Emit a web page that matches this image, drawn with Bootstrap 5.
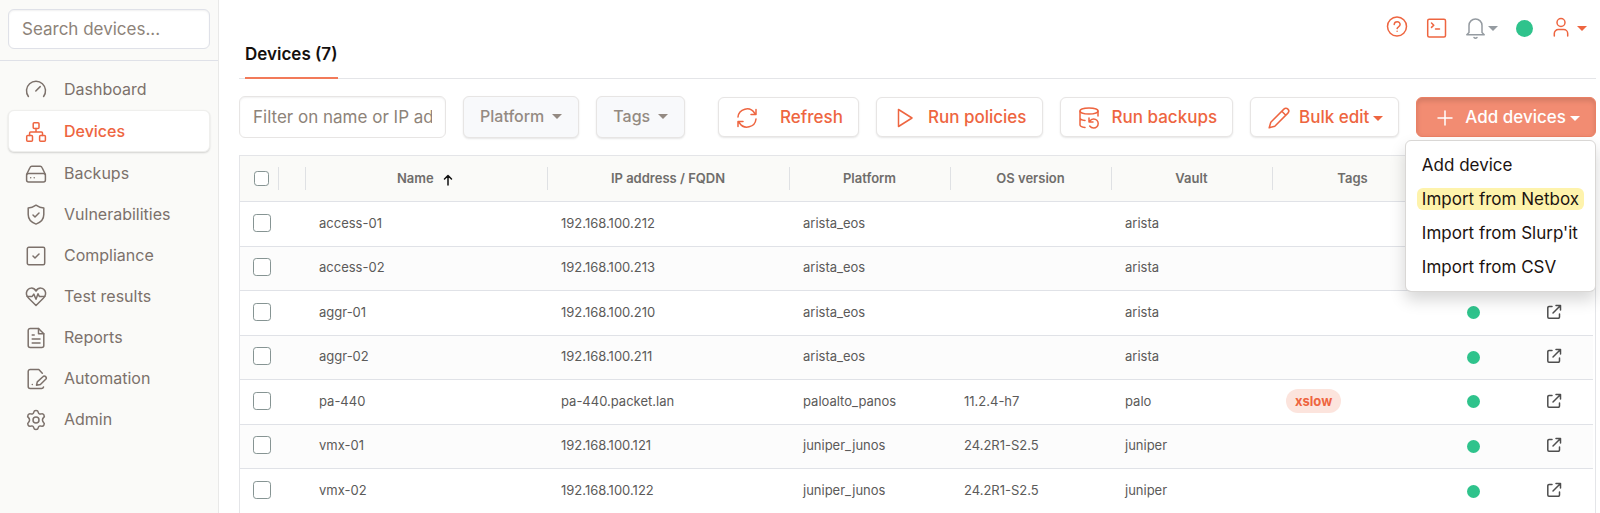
<!DOCTYPE html>
<html lang="en">
<head>
<meta charset="utf-8">
<meta name="viewport" content="width=device-width, initial-scale=1">
<title>Devices</title>
<link href="https://cdn.jsdelivr.net/npm/bootstrap@5.3.0/dist/css/bootstrap.min.css" rel="stylesheet">
<style>
:root { --brand: #ee6540; --stone: #7c716b; --rule: #e4e5e8; --ok: #2fc38c; }
body { font-family: Inter, "Liberation Sans", sans-serif; font-size: 16px; line-height: 24px; color: #1c1310; }
svg { fill: none; stroke: currentColor; stroke-width: 1.5; stroke-linecap: round; stroke-linejoin: round; flex: none; }
.side-panel { width: 219px; background: #fafaf8; border-right: 1px solid #e9e9e8; }
.side-search { height: 61px; padding: 9px 8px; border-bottom: 1px solid #dfe1e8; }
.form-control { border-color: #dfe1e8; border-radius: 6px; font-size: 17px; padding: 0 13px; box-shadow: inset 0 1px 2px rgba(0,0,0,.06); }
.form-control::placeholder { color: #8d8379; }
.side-search .form-control { height: 40px; }
.side-nav { padding: 8px; gap: 1px; }
.side-nav .nav-link { height: 40px; padding: 0 16px; gap: 16px; color: var(--stone); display: flex; align-items: center; border-radius: 6px; border: 1px solid transparent; }
.side-nav .nav-link svg { margin-top: 2px; margin-left: -1px; }
.side-nav .nav-link.active { height: 42px; background: #fff; color: var(--brand); font-weight: 500; border-color: #efefed; box-shadow: 0 1px 2px rgba(0,0,0,.16); }
.main-area { padding: 0 4px 0 20px; min-width: 0; }
.page-head { height: 79px; border-bottom: 1px solid var(--rule); }
.page-tab { height: 79px; margin-left: 6px; padding-top: 42px; font-size: 17px; font-weight: 600; color: #14100e; text-decoration: none; border-bottom: 2px solid #f27a59; }
.head-tools { height: 56px; padding-right: 9px; color: var(--brand); }
.tool-btn { background: none; border: 0; padding: 0; color: inherit; display: flex; align-items: center; }
.bell-btn { color: #959ba1; margin-right: 2px; }
.bell-btn.dropdown-toggle::after { margin-left: 1px; }
.status-dot { display: inline-block; width: 13px; height: 13px; border-radius: 50%; background: var(--ok); vertical-align: middle; }
.status-dot.big { width: 17px; height: 17px; }
.tool-row { padding: 17px 0; gap: 17px; }
.tool-row .form-control { width: 207px; height: 42px; border-color: #e7e5e4; }
.tool-row .btn { height: 40px; border-radius: 6px; padding: 0 15px 0 16px; font-size: 17px; line-height: 24px; font-weight: 500; color: var(--brand); background: #fff; border: 1px solid #e7e5e4; box-shadow: 0 1px 2px rgba(0,0,0,.1); display: flex; align-items: center; white-space: nowrap; }
.tool-row .btn svg { margin-top: 2px; }
.tool-row .btn-filter { height: 42px; padding: 0 16px 2px; font-size: 16px; background: #f8f9fb; color: #948a82; }
.tool-row .btn-add { background: #f28c72; border-color: #ea8064; color: #fff; box-shadow: inset 0 3px 5px rgba(0,0,0,.125); }
.dropdown-toggle::after { margin-left: 4px; vertical-align: middle; border-top-width: 5px; border-left-width: 5px; border-right-width: 5px; }
.btn-filter.dropdown-toggle::after { margin-left: 8px; border-top-width: 5px; border-left-width: 5px; border-right-width: 5px; }
.gap-narrow { gap: 11px; }
.gap-wide { gap: 21px; }
.add-menu { display: block; top: 43px; right: 0; min-width: 190px; padding: 7px 0; border: 1px solid #d9d7d5; border-radius: 6px; box-shadow: 0 8px 16px rgba(0,0,0,.16); --bs-dropdown-font-size: 17px; }
.add-menu .dropdown-item { height: 34px; padding: 6px 11px; color: #1c1310; line-height: 22px; }
.add-menu .dropdown-item span { display: inline-block; padding: 0 5px; border-radius: 6px; }
.add-menu .picked { background: #fef3ac; }
.grid-box { padding-right: 2px; border: 1px solid var(--rule); border-bottom: 0; }
.device-grid { table-layout: fixed; width: 100%; margin: 0; font-size: 13px; line-height: 20px; color: #5b5a59; }
.device-grid th, .device-grid td { vertical-align: middle; white-space: nowrap; }
.device-grid th { padding: 0 13px; font-weight: 600; color: #6f6d6b; text-align: center; }
.device-grid td { padding: 0 13px 2px 14px; }
.device-grid th:first-child, .device-grid td:first-child { padding-left: 13px; }
.device-grid thead tr { height: 45px; background: #fafaf8; }
.device-grid th + th { background: linear-gradient(#dfe1e4, #dfe1e4) left center / 1px 23px no-repeat; }
.device-grid tbody tr { height: 45px; border-top: 1px solid #e0e2e7; }
.device-grid tbody tr:nth-child(even) { height: 44px; background: #fcfcfc; }
.sort-arrow { color: #111; }
.form-check-input { width: 18px; height: 18px; margin: 0; display: block; border: 1px solid #869493; border-radius: 3px; }
.form-check-input.small-box { width: 15px; height: 15px; margin-left: 1px; }
.tag-pill { padding: 0 9px; height: 24px; line-height: 24px; border-radius: 12px; background: #fce4dd; color: var(--brand); font-weight: 700; display: inline-block; }
.open-link { color: #4e4e4e; display: block; line-height: 0; }
</style>
</head>
<body>
<div class="d-flex min-vh-100">
  <aside class="side-panel flex-shrink-0">
    <div class="side-search"><input class="form-control" type="search" placeholder="Search devices..." aria-label="Search devices"></div>
    <nav class="side-nav nav flex-column">
      <a class="nav-link" href="#"><svg width="24" height="24" viewBox="0 0 24 24"><path d="M4.400 18.500a9.500 9.500 0 1 1 15.200 0M11.800 13l4.400-4.400"/></svg>Dashboard</a>
      <a class="nav-link active" aria-current="page" href="#"><svg width="24" height="24" viewBox="0 0 24 24"><rect x="9.200" y="2.700" width="5.800" height="5.800" rx="1"/><rect x="2.700" y="15.400" width="5.800" height="5.800" rx="1"/><rect x="15.600" y="15.400" width="5.800" height="5.800" rx="1"/><path d="M12 8.500V12M5.600 15.400V13a1 1 0 0 1 1-1h10.900a1 1 0 0 1 1 1v2.400"/></svg>Devices</a>
      <a class="nav-link" href="#"><svg width="24" height="24" viewBox="0 0 24 24"><path d="M2.600 12.500 6 5.500a2 2 0 0 1 1.800-1.200h8.400a2 2 0 0 1 1.800 1.200l3.400 7"/><rect x="2.600" y="11.600" width="18.800" height="8.300" rx="2"/><path d="M6.700 15.800h.01M10.200 15.800h.01"/></svg>Backups</a>
      <a class="nav-link" href="#"><svg width="24" height="24" viewBox="0 0 24 24"><path d="M12 2.200c2.400 1.700 5 2.700 7.800 2.900v6.500c0 4.500-3 7.900-7.800 9.500-4.800-1.600-7.800-5-7.800-9.500V5.100C7 4.900 9.600 3.900 12 2.200z"/><path d="m9 12 2 2 4-4"/></svg>Vulnerabilities</a>
      <a class="nav-link" href="#"><svg width="24" height="24" viewBox="0 0 24 24"><rect x="3.300" y="3.300" width="17.400" height="17.400" rx="1.500"/><path d="m9 12 2 2 4-4"/></svg>Compliance</a>
      <a class="nav-link" href="#"><svg width="24" height="24" viewBox="0 0 24 24"><path d="M19.300 13.200 12 20.500l-7.300-7.300C2.600 11 1.900 8.300 2.900 6.100 4.500 2.400 9.500 1.900 12 6c2.500-4.100 7.500-3.600 9.100.1 1 2.200.3 4.900-1.800 7.100z"/><path d="M3.200 11.400h5l1.600-2.300 2.200 5.200 2-5.500 1.300 2.600h5.500"/></svg>Test results</a>
      <a class="nav-link" href="#"><svg width="24" height="24" viewBox="0 0 24 24"><path d="M14.500 2.500H6.200a2 2 0 0 0-2 2v15a2 2 0 0 0 2 2h11.600a2 2 0 0 0 2-2V7.800l-5.300-5.300z"/><path d="M14.500 2.500v5.300h5.300M8.200 9h2M8.200 13h7.800M8.200 17h7.800"/></svg>Reports</a>
      <a class="nav-link" href="#"><svg width="24" height="24" viewBox="0 0 24 24"><path d="M18.300 6.300 14.800 2.500H6.200a2 2 0 0 0-2 2v15a2 2 0 0 0 2 2h11.300a2 2 0 0 0 2-1.500M8.300 17.500h.01M12.500 18.200l.8-3.300 5.600-5.200a1.900 1.900 0 0 1 2.800 2.600l-5.300 5.200z"/></svg>Automation</a>
      <a class="nav-link" href="#"><svg width="24" height="24" viewBox="0 0 24 24"><path d="M9.800 4.200c.3-2.300 4.100-2.300 4.400 0 .2 1.500 1.700 2.300 3.100 1.700 2.200-.8 4 2.300 2.200 3.700-1.400 1.400-1.400 3.400 0 4.800 1.800 1.400 0 4.500-2.200 3.700-1.400-.6-2.900.2-3.100 1.700-.3 2.300-4.100 2.300-4.400 0-.2-1.500-1.700-2.300-3.100-1.700-2.200.8-4-2.300-2.200-3.700 1.400-1.400 1.400-3.400 0-4.800-1.800-1.400 0-4.500 2.200-3.700 1.400.6 2.900-.2 3.100-1.700z"/><circle cx="12" cy="12" r="3"/></svg>Admin</a>
    </nav>
  </aside>

  <main class="main-area flex-grow-1">
    <header class="page-head d-flex justify-content-between">
      <a class="page-tab" href="#">Devices (7)</a>
      <div class="head-tools d-flex align-items-center gap-3">
        <button class="tool-btn" aria-label="Help"><svg width="24" height="24" viewBox="0 0 24 24"><circle cx="12" cy="10.500" r="9.500"/><path d="M9.200 8.500c.3-3.600 6-3.500 5.900.1 0 2.300-2.900 2-3 4M12.100 15.200v.1"/></svg></button>
        <button class="tool-btn" aria-label="Console"><svg width="24" height="24" viewBox="0 0 24 24"><rect x="2.700" y="3.200" width="17.800" height="17.800" rx="1.500"/><path d="m6.500 7 2.300 2.200-2.300 2.200M10.500 13h4"/></svg></button>
        <button class="tool-btn bell-btn dropdown-toggle" aria-label="Notifications"><svg width="22" height="24" viewBox="0 0 22 24"><path d="M4 16.500V9.500a6.500 6.500 0 0 1 13 0v7l2.200 2.200H1.800zM9 21.500c.9.900 2.100.9 3 0"/></svg></button>
        <span class="status-dot big" role="img" aria-label="Online"></span>
        <button class="tool-btn dropdown-toggle" aria-label="Account"><svg width="24" height="24" viewBox="0 0 24 24"><circle cx="12" cy="6.500" r="4"/><path d="M5.300 20v-2.500a4 4 0 0 1 4-4h5.400a4 4 0 0 1 4 4V20"/></svg></button>
      </div>
    </header>

    <div class="tool-row d-flex align-items-center">
      <input class="form-control flex-shrink-0" type="text" placeholder="Filter on name or IP address" aria-label="Filter on name or IP address">
      <button class="btn btn-filter dropdown-toggle">Platform</button>
      <button class="btn btn-filter dropdown-toggle">Tags</button>
      <button class="btn gap-wide ms-auto"><svg width="24" height="24" viewBox="0 0 24 24"><path d="M3 11a9 9 0 0 1 16.500-4L21 8.500M21 3.500v5h-5M21 13a9 9 0 0 1-16.500 4L3 15.500M3 20.500v-5h5"/></svg>Refresh</button>
      <button class="btn gap-narrow"><svg width="24" height="24" viewBox="0 0 24 24"><path d="M5.500 3.500v17L19 12z"/></svg>Run policies</button>
      <button class="btn gap-narrow"><svg width="24" height="24" viewBox="0 0 24 24"><ellipse cx="12" cy="5" rx="9" ry="3"/><path d="M3 5v14c0 1.100 2 2 5 2.500M3 12c0 1.100 2 2 5 2.500M21 5v5M12 12v4h4M12.700 20a5 5 0 0 0 4 2 4.500 4.500 0 0 0 4.500-4.500 4.500 4.500 0 0 0-4.500-4.500c-1.400 0-2.600.6-3.400 1.500L12 16"/></svg>Run backups</button>
      <button class="btn"><svg class="me-2" width="24" height="24" viewBox="0 0 24 24"><path d="m3.800 16.200-1.600 5.600 5.600-1.600L20.900 7.100a2.800 2.800 0 0 0-4-4zM14.800 5.200l4 4"/></svg><span class="dropdown-toggle">Bulk edit</span></button>
      <div class="dropdown">
        <button class="btn btn-add" aria-expanded="true"><svg class="me-2" width="24" height="24" viewBox="0 0 24 24"><path d="M12 5v14M5 12h14"/></svg><span class="dropdown-toggle">Add devices</span></button>
        <ul class="dropdown-menu add-menu show">
          <li><a class="dropdown-item" href="#"><span>Add device</span></a></li>
          <li><a class="dropdown-item" href="#"><span class="picked">Import from Netbox</span></a></li>
          <li><a class="dropdown-item" href="#"><span>Import from Slurp'it</span></a></li>
          <li><a class="dropdown-item" href="#"><span>Import from CSV</span></a></li>
        </ul>
      </div>
    </div>

    <div class="grid-box">
      <table class="device-grid">
        <colgroup><col style="width:38px"><col style="width:27px"><col style="width:242px"><col style="width:242px"><col style="width:161px"><col style="width:161px"><col style="width:161px"><col style="width:161px"><col style="width:80px"><col style="width:80px"></colgroup>
        <thead><tr>
          <th><input class="form-check-input small-box" type="checkbox" aria-label="Select all devices"></th><th></th>
          <th>Name <svg class="ms-1 sort-arrow" width="14" height="14" viewBox="0 0 14 14"><path d="M7 12V2.500M3.500 6 7 2.500 10.500 6"/></svg></th>
          <th>IP address / FQDN</th><th>Platform</th><th>OS version</th><th>Vault</th><th>Tags</th><th></th><th></th>
        </tr></thead>
        <tbody id="rows"></tbody>
      </table>
    </div>
  </main>
</div>
<script src="https://cdn.jsdelivr.net/npm/bootstrap@5.3.0/dist/js/bootstrap.bundle.min.js"></script>
<script>
const devices = [
  ['access-01', '192.168.100.212', 'arista_eos', '', 'arista', ''],
  ['access-02', '192.168.100.213', 'arista_eos', '', 'arista', ''],
  ['aggr-01', '192.168.100.210', 'arista_eos', '', 'arista', ''],
  ['aggr-02', '192.168.100.211', 'arista_eos', '', 'arista', ''],
  ['pa-440', 'pa-440.packet.lan', 'paloalto_panos', '11.2.4-h7', 'palo', 'xslow'],
  ['vmx-01', '192.168.100.121', 'juniper_junos', '24.2R1-S2.5', 'juniper', ''],
  ['vmx-02', '192.168.100.122', 'juniper_junos', '24.2R1-S2.5', 'juniper', '']
];
document.getElementById('rows').innerHTML = devices.map(d => `<tr>
  <td><input class="form-check-input" type="checkbox" aria-label="Select ${d[0]}"></td><td></td>
  ${d.slice(0, 5).map(v => `<td>${v}</td>`).join('')}
  <td>${d[5] ? `<span class="tag-pill">${d[5]}</span>` : ''}</td>
  <td class="text-center"><span class="status-dot" role="img" aria-label="Up"></span></td>
  <td class="text-center"><a class="open-link" href="#" aria-label="Open ${d[0]}"><svg width="16" height="16" viewBox="0 0 16 16"><path d="M6 2.500H3A1.200 1.200 0 0 0 1.800 3.700v9.300a1.200 1.200 0 0 0 1.200 1.200h9.300a1.200 1.200 0 0 0 1.200-1.200v-3M7 9l7-7M10 1.500h4.500V6"/></svg></a></td>
</tr>`).join('');
</script>
</body>
</html>
